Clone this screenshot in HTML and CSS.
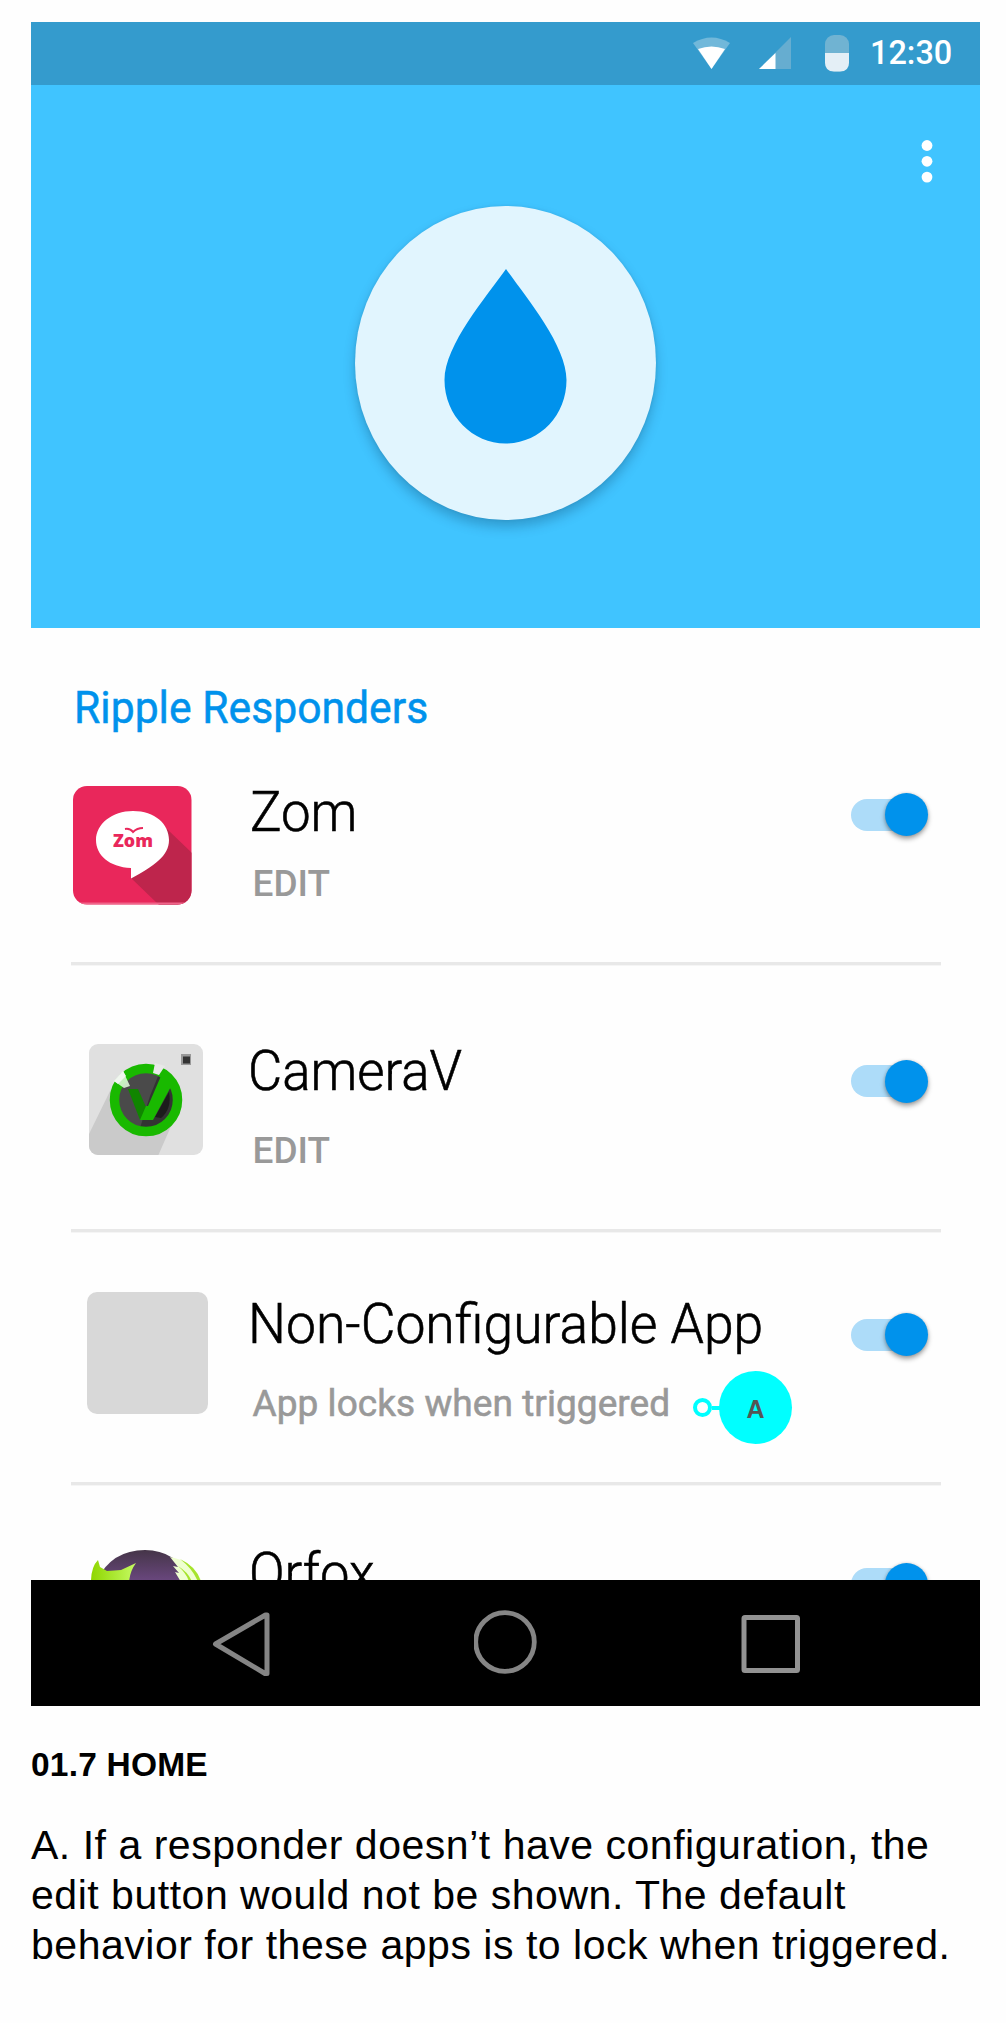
FILE: index.html
```html
<!DOCTYPE html>
<html lang="en">
<head>
<meta charset="utf-8">
<title>01.7 Home</title>
<link rel="stylesheet" href="styles.css">
</head>
<body>
<main class="page">
  <section class="phone">
    <div class="status">
      <svg class="wifi" width="38" height="34" viewBox="0 0 38 34"><path d="M0 6Q18.500-5 37 6L18.500 32Z" fill="#71b8da"/><path d="M5 12Q18.500 7 32 12L18.500 32Z" fill="#fff"/></svg>
      <svg class="signal" width="33" height="33" viewBox="0 0 33 33"><path d="M0 32L32 0V32Z" fill="#66add0"/><path d="M0 32L16.500 16V32Z" fill="#fff"/></svg>
      <svg class="battery" width="24" height="37" viewBox="0 0 24 37"><rect width="24" height="36.500" rx="9" fill="#70b3d2"/><path d="M0 18H24V27.500Q24 36.500 15 36.500H9Q0 36.500 0 27.500Z" fill="#e4eff6"/></svg>
      <span class="clock">12:30</span>
    </div>
    <header class="hero">
      <div class="logo">
        <svg width="124" height="176" viewBox="0 0 124 176"><path d="M62 0C81 27 122.500 76 122.500 111C122.500 147 95 174.500 61.500 174.500C29 174.500 .5 147 .5 111C.5 76 43 27 62 0Z" fill="#0092ec"/></svg>
      </div>
      <svg class="more" width="12" height="44" viewBox="0 0 12 44"><g fill="#fff"><circle cx="6" cy="5.500" r="5.400"/><circle cx="6" cy="21.300" r="5.400"/><circle cx="6" cy="37.100" r="5.400"/></g></svg>
    </header>
    <div class="content">
      <h1 class="heading"><span>Ripple Responders</span></h1>
      <div class="row zom">
        <svg class="icon" width="119" height="119" viewBox="0 0 119 119">
          <defs><clipPath id="zomClip"><rect width="118.500" height="118.500" rx="14"/></clipPath></defs>
          <g clip-path="url(#zomClip)"><rect width="119" height="119" fill="#e9275b"/><path d="M94 43L119 67V119H86L58 92Z" fill="#be254c"/><path d="M0 117.500H119" stroke="#f0658a" stroke-width="2"/></g>
          <path d="M60 25C82 25 96 38 96 54C96 70 81 80 58 92.500V82C36 81 23 69 23 54C23 38 39 25 60 25Z" fill="#fff"/>
          <path d="M52 43Q57 42 60 46Q64 42 70 42" fill="none" stroke="#e9275b" stroke-width="2"/>
          <text class="zom-word" x="40" y="61" textLength="40" lengthAdjust="spacingAndGlyphs">Zom</text>
        </svg>
        <div class="text"><h2 class="name">Zom</h2><p class="sub">EDIT</p></div>
        <div class="switch"><i></i></div>
      </div>
      <div class="row camera">
        <svg class="icon" width="114" height="112" viewBox="0 0 114 112">
          <defs><clipPath id="camClip"><rect width="114" height="111" rx="9"/></clipPath></defs>
          <g clip-path="url(#camClip)"><rect width="114" height="112" fill="#e0e0e0"/><path d="M22 45L-2 94V112H69L83 80Z" fill="#cacaca"/></g>
          <circle cx="57" cy="56" r="28" fill="#4a4a4a"/>
          <path d="M69.500 31A28 28 0 0 1 51 84L61 52Z" fill="#333"/>
          <path d="M80 48L66 73L72 74Q83 65 80 48Z" fill="#1c1c1c"/>
          <circle cx="57" cy="56" r="31.500" fill="none" stroke="#19b900" stroke-width="9.500"/>
          <path d="M66 19L64 29L70 31L76 22Z" fill="#e8e8e8"/>
          <path d="M39 45H49L57 63L61 76H51Z" fill="#108500"/>
          <path d="M75 25L85 37L64 76H51L57 62H59Z" fill="#19b900"/>
          <path d="M25 37L34 27L41 42L35 44Z" fill="#d9f5d5" opacity=".9"/><path d="M25 37L34 27L37 32L29 40Z" fill="#f1f6f0"/>
          <rect x="92" y="10" width="10" height="11" fill="#999"/><rect x="94" y="12.500" width="7" height="7" fill="#333"/>
        </svg>
        <div class="text"><h2 class="name">CameraV</h2><p class="sub">EDIT</p></div>
        <div class="switch"><i></i></div>
      </div>
      <div class="row generic">
        <div class="icon blank"></div>
        <div class="text"><h2 class="name">Non-Configurable App</h2><p class="sub">App locks when triggered</p></div>
        <div class="switch"><i></i></div>
        <div class="marker"><b>A</b></div>
      </div>
      <div class="row orfox">
        <svg class="icon" width="112" height="32" viewBox="0 0 112 32">
          <defs><linearGradient id="orb" x1="0" y1="0" x2="0" y2="1"><stop offset="0" stop-color="#453548"/><stop offset="1" stop-color="#6b4880"/></linearGradient><linearGradient id="fox"><stop offset="0" stop-color="#8fd600"/><stop offset="1" stop-color="#c5fa62"/></linearGradient></defs>
          <path d="M5 32Q20 0 54 0Q86 0 101 32Z" fill="url(#orb)"/>
          <path d="M0 32Q0 17 7 10L9 17L16 21L30 20L45 13Q39 21 38 32Z" fill="url(#fox)"/>
          <path d="M79 7Q102 11 111 32H90L84 22L88 23L82 16L87 17Z" fill="#efffd0"/>
          <path d="M89 9Q106 17 110 32H107Q102 19 89 9ZM87 16Q98 23 101 32H98Q96 24 87 16Z" fill="#a6e42c"/>
        </svg>
        <div class="text"><h2 class="name">Orfox</h2></div>
        <div class="switch"><i></i></div>
      </div>
    </div>
    <nav class="nav">
      <svg width="60" height="66" viewBox="0 0 60 66"><path d="M4.500 34L54.500 5H56V63.500H54Z" fill="none" stroke="#858585" stroke-width="5" stroke-linejoin="round"/></svg>
      <svg width="64" height="64" viewBox="0 0 64 64"><circle cx="31" cy="32" r="29.300" fill="none" stroke="#858585" stroke-width="4.800"/></svg>
      <svg width="60" height="58" viewBox="0 0 60 58"><rect x="4" y="2.500" width="53.500" height="53" rx="1" fill="none" stroke="#929292" stroke-width="5"/></svg>
    </nav>
  </section>
  <section class="notes">
    <h3 class="code">01.7 HOME</h3>
    <p class="note">A. If a responder doesn’t have configuration, the<br>edit button would not be shown. The default<br>behavior for these apps is to lock when triggered.</p>
  </section>
</main>
</body>
</html>
```
FILE: styles.css
```css
*, *::before, *::after { box-sizing: border-box; }
body, h1, h2, h3, p { margin: 0; }
body { background: #fefefe; color: #000; font-family: Roboto, sans-serif; }
svg { display: block; }
.page { width: 1006px; height: 2023px; padding: 22px 26px 0 31px; overflow: hidden; }
.phone { width: 949px; }

.status { display: flex; align-items: flex-start; height: 63px; padding: 13px 29px 0 0; justify-content: flex-end; background: #349bcd; }
.wifi { margin: 2px 28px 0 0; }
.signal { margin: 2px 33px 0 0; }
.battery { margin-right: 21px; }
.clock { width: 81px; height: 40px; margin-top: -3px; color: #fff; font-size: 34px; font-weight: 500; line-height: 40px; transform: scaleX(.953); transform-origin: left; }

.hero { display: grid; grid-template-columns: 1fr 301px 1fr; height: 543px; padding-top: 55px; background: #40c4ff; }
.logo { grid-column: 2; display: flex; justify-content: center; align-items: flex-start; height: 314px; margin-top: 66px; padding-top: 63px; border-radius: 50%; background: #e1f5fe; box-shadow: 0 7px 12px rgba(0, 40, 70, .26), 0 0 3px rgba(0, 40, 70, .1); }
.more { justify-self: end; margin-right: 47px; }

.content { height: 952px; padding: 53px 39.500px 0 40px; overflow: hidden; }
.heading { height: 53px; padding-left: 2.500px; color: #0092ec; font-size: 44px; font-weight: 400; line-height: 54px; }
.heading span { display: inline-block; transform: scaleX(.97); transform-origin: left; -webkit-text-stroke: .5px #0092ec; }
.row { position: relative; display: grid; grid-template-columns: 178px 1fr auto; align-items: start; border-bottom: 3px solid #e8e8e8; box-shadow: 0 1px #f5f5f5; }
.name { height: 60px; white-space: nowrap; font-size: 55px; font-weight: 300; line-height: 61px; transform: scaleX(.976); transform-origin: left; -webkit-text-stroke: .6px #000; }
.sub { margin-left: 3.500px; white-space: nowrap; color: #999; font-size: 37px; font-weight: 500; line-height: 40px; }
.switch { width: 77px; height: 43px; margin-right: 12.500px; padding-top: 5px; }
.switch::before { content: ""; display: block; height: 32px; width: 74px; border-radius: 16px; background: #addcf9; }
.switch i { display: block; width: 43px; height: 43px; margin: -37.500px 0 0 34px; border-radius: 50%; background: #0092ec; box-shadow: 0 3px 5px rgba(0, 0, 0, .36), 0 0 3px rgba(0, 0, 0, .15); }

.zom { height: 231px; }
.zom .icon { margin: 52px 0 0 2px; }
.zom .text { padding-top: 48px; }
.zom .sub { margin-top: 22px; }
.zom .switch { margin-top: 59.500px; }
.zom .name { padding-left: 1px; transform: scaleX(.96); }
.zom-word { fill: #e9275b; font: 900 18px "Open Sans", sans-serif; }

.camera { height: 267px; }
.camera .icon { margin: 79px 0 0 18px; }
.camera .text { padding-top: 76px; }
.camera .name { margin-left: -1px; transform: scaleX(.958); }
.camera .sub { margin-top: 30px; }
.camera .switch { margin-top: 95px; }

.generic { height: 253px; }
.blank { width: 121.500px; height: 121.500px; margin: 60px 0 0 15.500px; border-radius: 10px; background: #d8d8d8; }
.generic .text { padding-top: 62px; }
.generic .name { margin-left: -1px; transform: scaleX(.972); }
.generic .sub { margin-top: 30px; font-weight: 400; letter-spacing: .06px; -webkit-text-stroke: .6px #999; }
.generic .switch { margin-top: 81.500px; }
.marker { position: absolute; left: 622px; top: 139px; display: flex; align-items: center; }
.marker::before { content: ""; width: 19px; height: 19px; border: 4px solid #00ffff; border-radius: 50%; }
.marker::after { content: ""; order: 1; width: 8px; height: 4px; background: #00ffff; }
.marker b { order: 2; width: 73px; height: 73px; margin-left: -1px; border-radius: 50%; background: #00ffff; color: #555; font: 700 25px/76px "Liberation Sans", sans-serif; text-align: center; }

.orfox { height: 130px; }
.orfox .icon { margin: 65px 0 0 20px; }
.orfox .text { padding-top: 58px; }
.orfox .name { transform: scaleX(.955); }
.orfox .switch { margin-top: 78px; }

.nav { display: flex; justify-content: space-between; align-items: flex-start; height: 126px; padding: 30px 180px 0; background: #000; }
.nav svg:nth-child(3) { margin-top: 5px; }

.notes { font-family: "Liberation Sans", sans-serif; }
.code { margin-top: 39px; font-size: 33.500px; line-height: 40px; letter-spacing: .2px; }
.note { margin-top: 35px; font-size: 41px; line-height: 50px; letter-spacing: .52px; white-space: nowrap; }
```
